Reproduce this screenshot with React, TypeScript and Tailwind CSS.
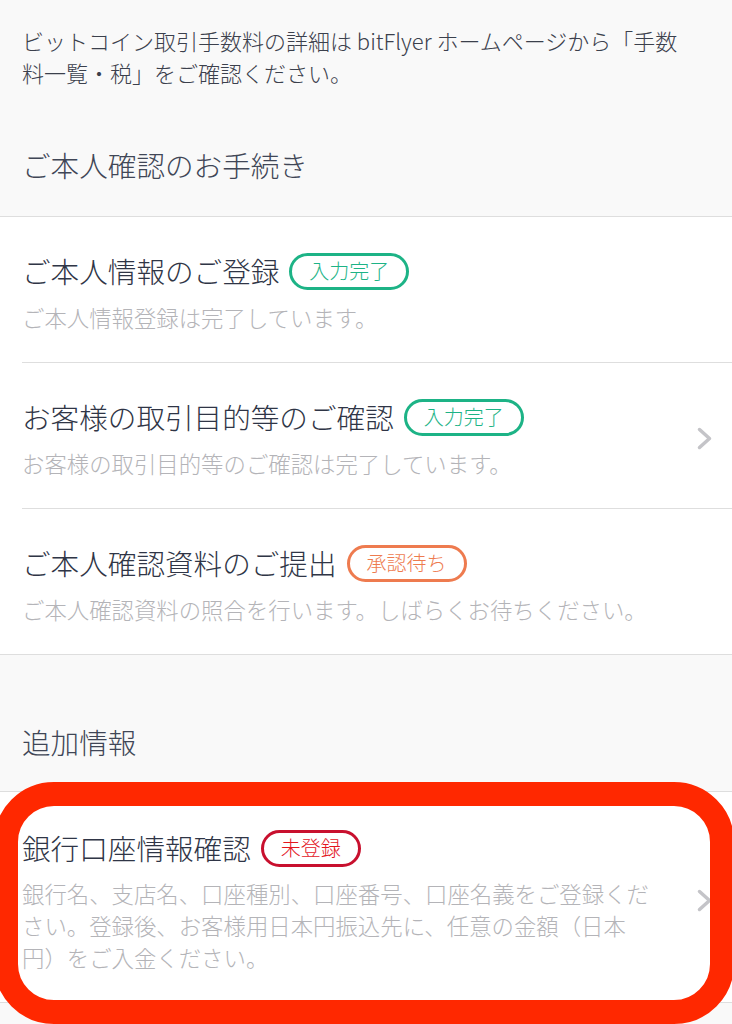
import React from "react";

type Tone = "green" | "orange" | "red";

const badgeTone: Record<Tone, string> = {
  green: "border-[#1db386] text-[#1db386]",
  orange: "border-[#ee7b4f] text-[#ee7b4f]",
  red: "border-[#c8102e] text-[#e3161f]",
};

const Badge = ({ tone, label }: { tone: Tone; label: string }) => (
  <span
    className={`ml-[10px] inline-flex h-[37px] shrink-0 items-center rounded-full border-[3px] px-[17px] text-[20px] leading-none font-light ${badgeTone[tone]}`}
  >
    {label}
  </span>
);

const Chevron = () => (
  <svg width="15" height="23" viewBox="0 0 15 23" className="shrink-0">
    <polyline
      points="2.5,2.5 12.5,11.5 2.5,20.5"
      fill="none"
      stroke="#c4c4c8"
      strokeWidth="3.5"
      strokeLinecap="round"
      strokeLinejoin="round"
    />
  </svg>
);

type Item = {
  title: string;
  tone: Tone;
  badge: string;
  desc: string;
  link?: boolean;
};

const steps: Item[] = [
  {
    title: "ご本人情報のご登録",
    tone: "green",
    badge: "入力完了",
    desc: "ご本人情報登録は完了しています。",
  },
  {
    title: "お客様の取引目的等のご確認",
    tone: "green",
    badge: "入力完了",
    desc: "お客様の取引目的等のご確認は完了しています。",
    link: true,
  },
  {
    title: "ご本人確認資料のご提出",
    tone: "orange",
    badge: "承認待ち",
    desc: "ご本人確認資料の照合を行います。しばらくお待ちください。",
  },
];

const Row = ({ item, divider }: { item: Item; divider: boolean }) => (
  <div
    className={`flex items-center gap-[43px] pr-[20px] pt-[34px] pb-[29px] ${
      divider ? "border-b border-[#dedede]" : ""
    }`}
  >
    <div className="min-w-0 flex-1">
      <div className="flex h-[40px] items-center">
        <span className="text-[28.6px] leading-[40px] font-light text-[#2f3546]">{item.title}</span>
        <Badge tone={item.tone} label={item.badge} />
      </div>
      <p className="mt-[10px] text-[22.4px] leading-[32px] font-light text-[#b4b4b8]">{item.desc}</p>
    </div>
    {item.link && <Chevron />}
  </div>
);

export default function App() {
  return (
    <div
      className="min-h-screen overflow-hidden bg-[#f9f9f9]"
      style={{ fontFamily: '"Noto Sans CJK JP", "Noto Sans", sans-serif' }}
    >
      {/* fee note + section header */}
      <div className="border-b border-[#dedede]">
        <p className="pl-[22px] pr-[36px] pt-[24px] text-[22px] leading-[32px] font-light text-[#3b404c]">
          ビットコイン取引手数料の詳細は bitFlyer ホームページから「手数料一覧・税」をご確認ください。
        </p>
        <h2 className="px-[22px] pt-[57px] pb-[31px] text-[28.6px] leading-[40px] font-light text-[#404656]">
          ご本人確認のお手続き
        </h2>
      </div>

      <div className="border-b border-[#dedede] bg-white pl-[22px]">
        {steps.map((s, i) => (
          <Row key={s.title} item={s} divider={i < steps.length - 1} />
        ))}
      </div>

      <div className="border-b border-[#dedede]">
        <h2 className="px-[22px] pt-[67px] pb-[29px] text-[28.6px] leading-[40px] font-light text-[#404656]">
          追加情報
        </h2>
      </div>

      <div className="relative border-b border-[#dedede] bg-white pl-[22px]">
        <div className="flex items-center gap-[43px] pr-[20px] pt-[36px] pb-[29px]">
          <div className="min-w-0 flex-1">
            <div className="flex h-[40px] items-center">
              <span className="text-[28.6px] leading-[40px] font-light text-[#2f3546]">銀行口座情報確認</span>
              <Badge tone="red" label="未登録" />
            </div>
            <p className="mt-[9px] text-[22.4px] leading-[32px] font-light text-[#b4b4b8]">
              銀行名、支店名、口座種別、口座番号、口座名義をご登録ください。登録後、お客様用日本円振込先に、任意の金額（日本円）をご入金ください。
            </p>
          </div>
          <Chevron />
        </div>
        {/* red highlight annotation */}
        <div className="pointer-events-none absolute -top-[10px] -left-[6px] h-[242px] w-[740px] rounded-[60px] border-[24px] border-[#ff2800]" />
      </div>
    </div>
  );
}
